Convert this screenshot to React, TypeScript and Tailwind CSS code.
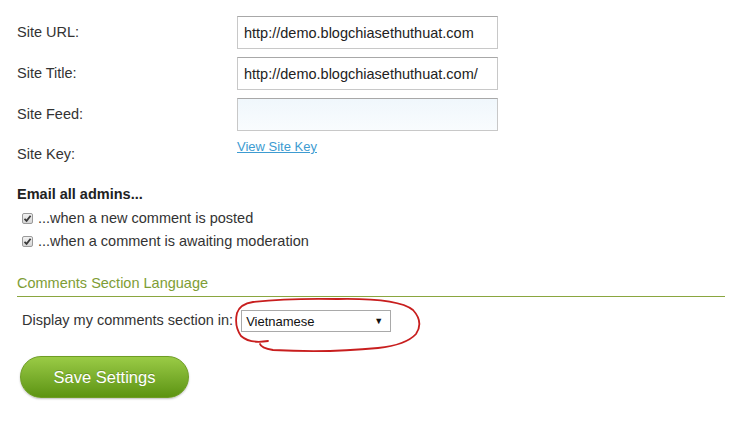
import React from 'react';

const fields = [
  { label: 'Site URL:', value: 'http://demo.blogchiasethuthuat.com' },
  { label: 'Site Title:', value: 'http://demo.blogchiasethuthuat.com/' },
  { label: 'Site Feed:', value: '' },
];

function Check() {
  return (
    <span className="w-[11px] h-[11px] border border-[#9a9a9a] rounded-[2px] bg-gradient-to-b from-[#f2f2f2] to-[#d6d6d6] flex items-center justify-center">
      <svg width="9" height="9" viewBox="0 0 9 9">
        <path d="M1.5 4.8 L3.6 6.8 L7.6 1.8" fill="none" stroke="#3a3a3a" strokeWidth="1.8" />
      </svg>
    </span>
  );
}

export default function App() {
  return (
    <div
      className="relative w-[739px] h-[425px] bg-white text-[#222] overflow-hidden pl-[17px] pt-[16px]"
      style={{ fontFamily: '"Liberation Sans", Arial, sans-serif' }}
    >
      {/* Site fields */}
      <div className="flex flex-col gap-[8px]">
        {fields.map(f => (
          <div key={f.label} className="flex items-center">
            <span className="w-[220px] text-[14.5px] text-[#333]">{f.label}</span>
            <input
              readOnly
              value={f.value}
              className={
                'w-[261px] h-[33px] px-[6px] text-[14.5px] text-[#222] border border-[#c8c8c8] border-t-[#a8a8a8] outline-none ' +
                (f.value ? 'bg-white' : 'bg-gradient-to-b from-[#f0f7fc] to-[#f9fcfe]')
              }
            />
          </div>
        ))}
        <div className="flex items-start">
          <span className="w-[220px] pt-[5px] text-[14.5px] text-[#333]">Site Key:</span>
          <a href="#" className="text-[13px] text-[#3d9bd1] underline leading-[15px]">View Site Key</a>
        </div>
      </div>

      {/* Email admins */}
      <div className="mt-[18px] text-[14.5px] font-bold text-[#222]">Email all admins...</div>
      <div className="flex flex-col gap-[6px] mt-[4px] pl-[5px]">
        {['...when a new comment is posted', '...when a comment is awaiting moderation'].map(t => (
          <div key={t} className="flex items-center gap-[5px] text-[14.5px] text-[#333] leading-[17px]">
            <Check />
            <span>{t}</span>
          </div>
        ))}
      </div>

      {/* Language */}
      <div className="mt-[23px] w-[708px] border-b border-[#8aa63f] pb-[2px] text-[14.5px] text-[#7e9d35]">
        Comments Section Language
      </div>
      <div className="flex items-center mt-[13px] pl-[5px] text-[14.5px] text-[#333]">
        <span>Display my comments section in:</span>
        <div className="ml-[8px] w-[150px] h-[22px] border border-[#a9a9a9] bg-white flex items-center justify-between pl-[4px] pr-[7px] text-[13px] text-[#111]">
          <span>Vietnamese</span>
          <span className="text-[9px]">▼</span>
        </div>
      </div>

      {/* Save */}
      <button className="mt-[24px] ml-[3px] w-[169px] h-[42px] rounded-full border border-[#6e9d24] bg-gradient-to-b from-[#9acb45] to-[#5d9410] text-white text-[16.5px] shadow-[0_1px_2px_rgba(0,0,0,0.25)] [text-shadow:0_-1px_0_rgba(0,0,0,0.2)]">
        Save Settings
      </button>

      {/* red hand-drawn annotation */}
      <svg className="absolute left-[228px] top-[288px]" width="200" height="70" viewBox="0 0 200 70">
        <path
          d="M40 53 Q22 56 13 48 Q6 38 9 25 Q12 16 25 14 Q60 10 110 11 Q170 10 185 22 Q196 34 188 46 Q178 57 150 60 Q100 65 45 62 Q33 60 32 56"
          fill="none"
          stroke="#c81e1e"
          strokeWidth="1.8"
          strokeLinecap="round"
        />
      </svg>
    </div>
  );
}
